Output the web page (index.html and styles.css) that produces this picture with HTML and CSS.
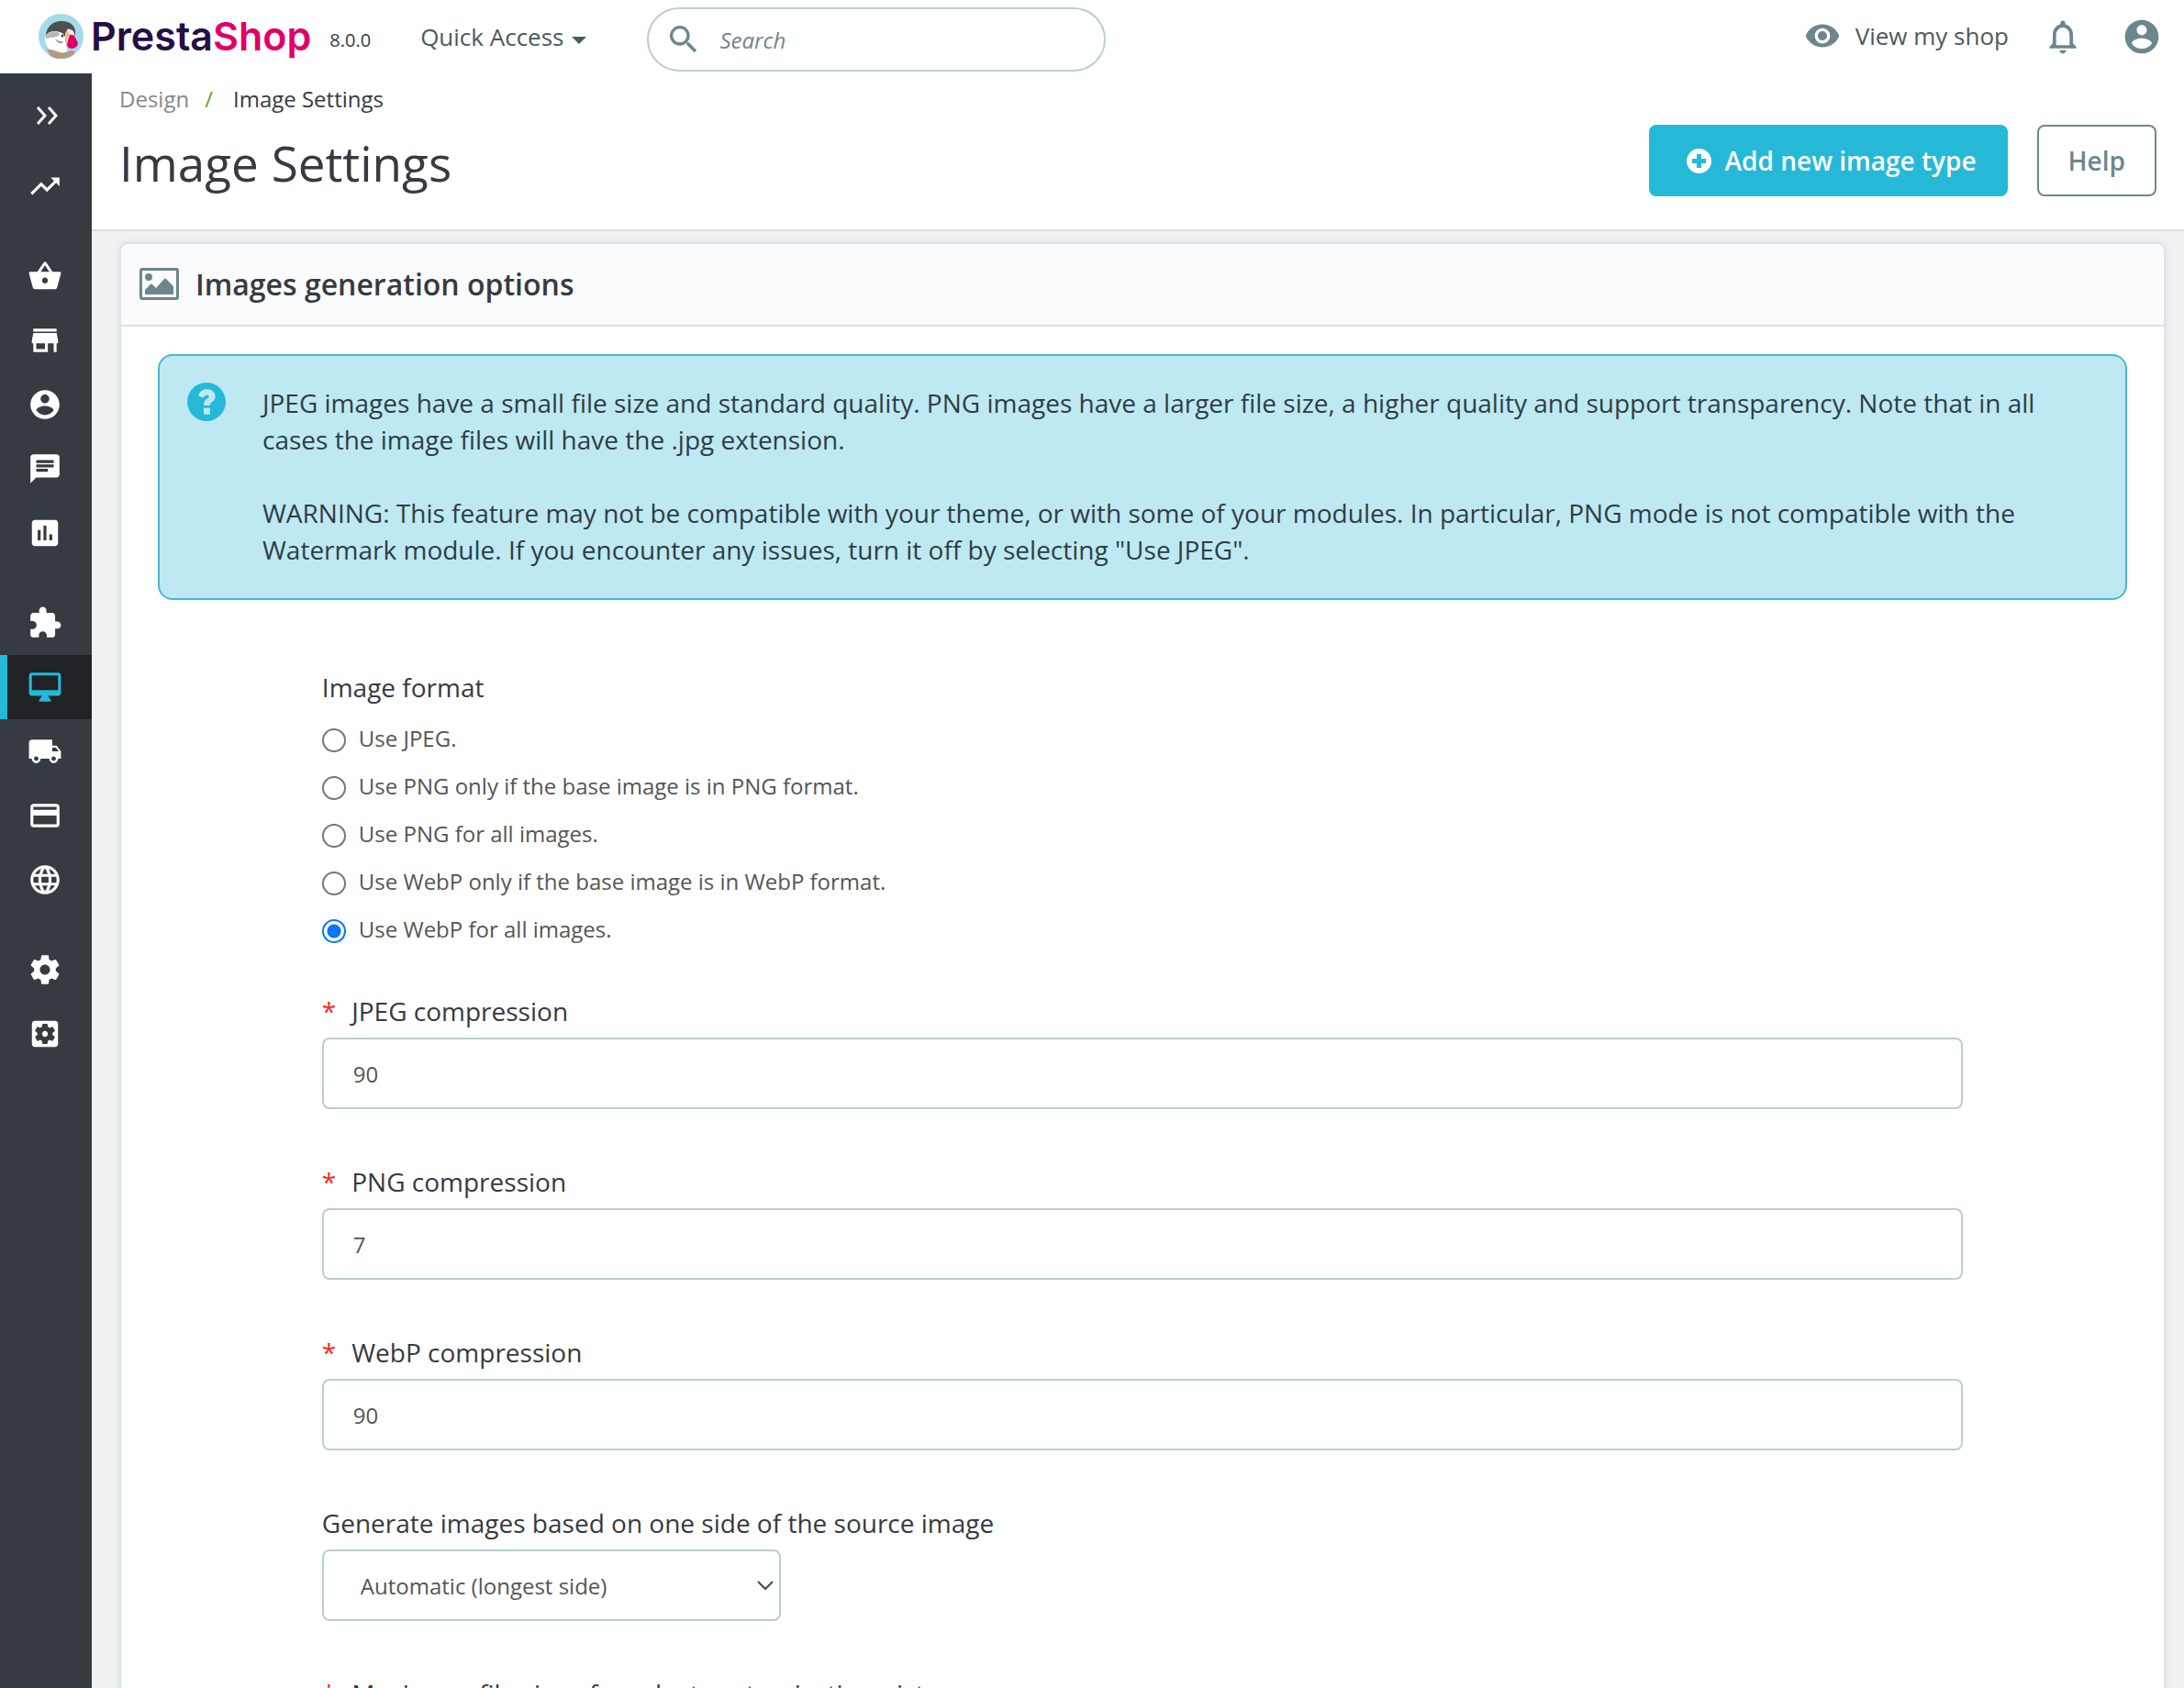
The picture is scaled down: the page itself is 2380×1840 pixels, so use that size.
FILE: index.html
```html
<!DOCTYPE html>
<html lang="en">
<head>
<meta charset="utf-8">
<meta name="viewport" content="width=device-width, initial-scale=1">
<title>Image Settings • PrestaShop</title>
<link rel="stylesheet" href="styles.css">
</head>
<body>
<header class="topbar">
  <a class="brand" href="#" aria-label="PrestaShop">
    <svg class="brand-mark" viewBox="0 0 49 49" aria-hidden="true">
      <defs><clipPath id="roundel"><circle cx="24.500" cy="24.500" r="24.500"/></clipPath></defs>
      <g clip-path="url(#roundel)">
        <rect width="49" height="49" fill="#a4dbe8"/>
        <path d="M8 27C7 15 15 8 25 8s16 6 15 14l-4 7-20 2z" fill="#4d4f50"/>
        <path d="M7 27c1-5 5-8 10-8 6 0 11 2 12 7l2 15-8 4c-9 0-15-8-16-18z" fill="#fff"/>
        <path d="M8 25c3-5 8-7 13-5 3 1 2 4-1 5-5 1-8 1-12 2z" fill="#b9b6b4"/>
        <path d="M9 39c4-1 8 1 14 3 4 1 8 0 12-2 3 0 5 1 5 2L34 49H15z" fill="#b39a80"/>
        <path d="M31 17c4-1 8 1 8 6l-4 3-4-3z" fill="#f3e9e9"/>
        <path d="M30 19c3 0 4 3 4 6l-3 10c-2-3-3-13-1-16z" fill="#f5b895"/>
        <path d="M34 23c3-1 7 2 9 10-1 3-4 5-8 5-2-1-4-2-4-4z" fill="#df0067"/>
        <path d="M18 27c3 3 6 4 9 3-1 3-6 3-9-3z" fill="#77716e"/>
        <circle cx="26" cy="24" r="1.500" fill="#3c3c3c"/>
      </g>
    </svg>
    <span class="brand-name">Presta<span class="brand-accent">Shop</span></span>
  </a>
  <span class="version">8.0.0</span>
  <button class="quick" type="button">Quick Access
    <svg class="caret" viewBox="0 0 16 8" aria-hidden="true"><path d="M0 0h16L8 8z"/></svg>
  </button>
  <form class="search">
    <svg class="search-icon" viewBox="0 0 24 24" aria-hidden="true"><path d="M15.500 14h-.79l-.28-.27A6.471 6.471 0 0 0 16 9.500 6.500 6.500 0 1 0 9.500 16c1.610 0 3.090-.59 4.230-1.570l.27.28v.79l5 4.990L20.490 19l-4.990-5zm-6 0C7.010 14 5 11.990 5 9.500S7.010 5 9.500 5 14 7.010 14 9.500 11.990 14 9.500 14z"/></svg>
    <input class="search-input" type="search" placeholder="Search" aria-label="Search">
  </form>
  <div class="tools">
    <a class="view-shop" href="#">
      <svg class="eye" viewBox="0 0 24 24" aria-hidden="true"><path d="M12 4.500C7 4.500 2.730 7.610 1 12c1.730 4.390 6 7.500 11 7.500s9.270-3.110 11-7.500c-1.730-4.390-6-7.500-11-7.500zM12 17c-2.760 0-5-2.240-5-5s2.240-5 5-5 5 2.240 5 5-2.240 5-5 5zm0-8c-1.660 0-3 1.340-3 3s1.340 3 3 3 3-1.340 3-3-1.340-3-3-3z"/></svg>
      View my shop
    </a>
    <button class="tool" type="button" aria-label="Notifications"><svg viewBox="0 0 24 24"><path d="M12 22c1.100 0 2-.9 2-2h-4c0 1.100.9 2 2 2zm6-6v-5c0-3.070-1.630-5.640-4.500-6.320V4c0-.83-.67-1.500-1.500-1.500s-1.500.67-1.500 1.500v.68C7.640 5.360 6 7.920 6 11v5l-2 2v1h16v-1l-2-2zm-2 1H8v-6c0-2.480 1.510-4.500 4-4.500s4 2.020 4 4.500v6z"/></svg></button>
    <button class="tool" type="button" aria-label="Account"><svg viewBox="0 0 24 24"><path d="M12 2C6.480 2 2 6.480 2 12s4.480 10 10 10 10-4.480 10-10S17.520 2 12 2zm0 3c1.660 0 3 1.340 3 3s-1.340 3-3 3-3-1.340-3-3 1.340-3 3-3zm0 14.200c-2.500 0-4.710-1.280-6-3.220.03-1.990 4-3.080 6-3.080 1.990 0 5.970 1.090 6 3.080-1.290 1.940-3.500 3.220-6 3.220z"/></svg></button>
  </div>
</header>

<div class="shell">
  <nav class="sidebar" aria-label="Main menu">
    <button class="expand" type="button" aria-label="Expand menu"><svg viewBox="0 0 24 20"><path d="M2 1l8 9-8 9M14 1l8 9-8 9"/></svg></button>
    <ul class="menu">
      <li><a class="menu-link" href="#" aria-label="Dashboard"><svg viewBox="0 0 24 24"><path d="M16 6l2.290 2.290-4.880 4.880-4-4L2 16.590 3.410 18l6-6 4 4 6.300-6.290L22 12V6z"/></svg></a></li>
    </ul>
    <ul class="menu">
      <li><a class="menu-link" href="#" aria-label="Orders"><svg viewBox="0 0 24 24"><path d="M17.210 9l-4.380-6.560c-.19-.28-.51-.42-.83-.42-.32 0-.64.14-.83.43L6.790 9H2c-.55 0-1 .45-1 1 0 .09.01.18.04.27l2.540 9.270c.23.84 1 1.460 1.920 1.460h13c.92 0 1.690-.62 1.930-1.460l2.540-9.270L23 10c0-.55-.45-1-1-1h-4.790zM9 9l3-4.400L15 9H9zm3 8c-1.100 0-2-.9-2-2s.9-2 2-2 2 .9 2 2-.9 2-2 2z"/></svg></a></li>
      <li><a class="menu-link" href="#" aria-label="Catalog"><svg viewBox="0 0 24 24"><path d="M20 4H4v2h16V4zm1 10v-2l-1-5H4l-1 5v2h1v6h10v-6h4v6h2v-6h1zm-9 4H6v-4h6v4z"/></svg></a></li>
      <li><a class="menu-link" href="#" aria-label="Customers"><svg viewBox="0 0 24 24"><path d="M12 2C6.480 2 2 6.480 2 12s4.480 10 10 10 10-4.480 10-10S17.520 2 12 2zm0 3c1.660 0 3 1.340 3 3s-1.340 3-3 3-3-1.340-3-3 1.340-3 3-3zm0 14.200c-2.500 0-4.710-1.280-6-3.220.03-1.990 4-3.080 6-3.080 1.990 0 5.970 1.090 6 3.080-1.290 1.940-3.500 3.220-6 3.220z"/></svg></a></li>
      <li><a class="menu-link" href="#" aria-label="Customer service"><svg viewBox="0 0 24 24"><path d="M20 2H4c-1.100 0-1.990.9-1.990 2L2 22l4-4h14c1.100 0 2-.9 2-2V4c0-1.100-.9-2-2-2zM6 9h12v2H6V9zm8 5H6v-2h8v2zm4-6H6V6h12v2z"/></svg></a></li>
      <li><a class="menu-link" href="#" aria-label="Stats"><svg viewBox="0 0 24 24"><path d="M19 3H5c-1.100 0-2 .9-2 2v14c0 1.100.9 2 2 2h14c1.100 0 2-.9 2-2V5c0-1.100-.9-2-2-2zM9 17H7v-7h2v7zm4 0h-2V7h2v10zm4 0h-2v-4h2v4z"/></svg></a></li>
    </ul>
    <ul class="menu">
      <li><a class="menu-link" href="#" aria-label="Modules"><svg viewBox="0 0 24 24"><path d="M20.500 11H19V7c0-1.100-.9-2-2-2h-4V3.500C13 2.120 11.880 1 10.500 1S8 2.120 8 3.500V5H4c-1.100 0-1.990.9-1.990 2v3.800H3.500c1.490 0 2.700 1.210 2.700 2.700s-1.210 2.700-2.700 2.700H2V20c0 1.100.9 2 2 2h3.800v-1.500c0-1.490 1.210-2.700 2.700-2.700 1.490 0 2.700 1.210 2.700 2.700V22H17c1.100 0 2-.9 2-2v-4h1.500c1.380 0 2.500-1.120 2.500-2.500S21.880 11 20.500 11z"/></svg></a></li>
      <li><a class="menu-link active" href="#" aria-label="Design" aria-current="page"><svg viewBox="0 0 24 24"><path d="M21 2H3c-1.100 0-2 .9-2 2v12c0 1.100.9 2 2 2h7l-2 3v1h8v-1l-2-3h7c1.100 0 2-.9 2-2V4c0-1.100-.9-2-2-2zm0 12H3V4h18v10z"/></svg></a></li>
      <li><a class="menu-link" href="#" aria-label="Shipping"><svg viewBox="0 0 24 24"><path d="M20 8h-3V4H3c-1.100 0-2 .9-2 2v11h2c0 1.660 1.340 3 3 3s3-1.340 3-3h6c0 1.660 1.340 3 3 3s3-1.340 3-3h2v-5l-3-4zM6 18.500c-.83 0-1.500-.67-1.500-1.500s.67-1.500 1.500-1.500 1.500.67 1.500 1.500-.67 1.500-1.500 1.500zm13.500-9l1.960 2.500H17V9.500h2.500zm-1.500 9c-.83 0-1.500-.67-1.500-1.500s.67-1.500 1.500-1.500 1.500.67 1.500 1.500-.67 1.500-1.500 1.500z"/></svg></a></li>
      <li><a class="menu-link" href="#" aria-label="Payment"><svg viewBox="0 0 24 24"><path d="M20 4H4c-1.110 0-1.990.89-1.990 2L2 18c0 1.110.89 2 2 2h16c1.110 0 2-.89 2-2V6c0-1.110-.89-2-2-2zm0 14H4v-6h16v6zm0-10H4V6h16v2z"/></svg></a></li>
      <li><a class="menu-link" href="#" aria-label="International"><svg viewBox="0 0 24 24"><path d="M11.990 2C6.470 2 2 6.480 2 12s4.470 10 9.990 10C17.520 22 22 17.520 22 12S17.520 2 11.990 2zm6.930 6h-2.950c-.32-1.250-.78-2.450-1.380-3.560 1.840.63 3.370 1.910 4.330 3.560zM12 4.040c.83 1.200 1.480 2.530 1.910 3.960h-3.820c.43-1.430 1.080-2.760 1.910-3.960zM4.260 14C4.100 13.360 4 12.690 4 12s.1-1.360.26-2h3.380c-.08.66-.14 1.320-.14 2 0 .68.06 1.340.14 2H4.260zm.82 2h2.950c.32 1.250.78 2.450 1.380 3.560-1.840-.63-3.370-1.900-4.330-3.560zm2.950-8H5.080c.96-1.660 2.490-2.930 4.330-3.560C8.810 5.550 8.350 6.750 8.030 8zM12 19.960c-.83-1.200-1.480-2.530-1.910-3.960h3.820c-.43 1.430-1.080 2.760-1.910 3.960zM14.340 14H9.660c-.09-.66-.16-1.320-.16-2 0-.68.07-1.350.16-2h4.680c.09.65.16 1.320.16 2 0 .68-.07 1.340-.16 2zm.25 5.560c.6-1.110 1.060-2.310 1.380-3.560h2.950c-.96 1.650-2.490 2.930-4.330 3.560zM16.360 14c.08-.66.14-1.320.14-2 0-.68-.06-1.340-.14-2h3.380c.16.64.26 1.310.26 2s-.1 1.360-.26 2h-3.380z"/></svg></a></li>
    </ul>
    <ul class="menu">
      <li><a class="menu-link" href="#" aria-label="Shop parameters"><svg viewBox="0 0 24 24"><path d="M19.430 12.980c.04-.32.07-.64.07-.98s-.03-.66-.07-.98l2.110-1.650c.19-.15.24-.42.12-.64l-2-3.460c-.12-.22-.39-.3-.61-.22l-2.490 1c-.52-.4-1.080-.73-1.690-.98l-.38-2.650C14.460 2.180 14.250 2 14 2h-4c-.25 0-.46.18-.49.42l-.38 2.650c-.61.25-1.170.59-1.690.98l-2.490-1c-.23-.09-.49 0-.61.22l-2 3.460c-.13.22-.07.49.12.64l2.110 1.650c-.04.32-.07.65-.07.98s.03.66.07.98l-2.110 1.650c-.19.15-.24.42-.12.64l2 3.460c.12.22.39.3.61.22l2.490-1c.52.4 1.080.73 1.690.98l.38 2.650c.03.24.24.42.49.42h4c.25 0 .46-.18.49-.42l.38-2.650c.61-.25 1.170-.59 1.690-.98l2.490 1c.23.09.49 0 .61-.22l2-3.460c.12-.22.07-.49-.12-.64l-2.110-1.650zM12 15.500c-1.930 0-3.500-1.570-3.500-3.500s1.570-3.500 3.500-3.500 3.500 1.570 3.500 3.500-1.570 3.500-3.500 3.500z"/></svg></a></li>
      <li><a class="menu-link" href="#" aria-label="Advanced parameters"><svg viewBox="0 0 24 24"><path d="M12 10c-1.100 0-2 .9-2 2s.9 2 2 2 2-.9 2-2-.9-2-2-2zm7-7H5c-1.110 0-2 .9-2 2v14c0 1.100.89 2 2 2h14c1.110 0 2-.9 2-2V5c0-1.100-.89-2-2-2zm-1.750 9c0 .23-.02.46-.05.68l1.480 1.160c.13.11.17.3.08.45l-1.400 2.420c-.09.15-.27.21-.43.15l-1.740-.7c-.36.28-.76.51-1.180.69l-.26 1.850c-.03.17-.18.3-.35.3h-2.800c-.17 0-.32-.13-.35-.29l-.26-1.850c-.43-.18-.82-.41-1.180-.69l-1.740.7c-.16.06-.34 0-.43-.15l-1.400-2.420c-.09-.15-.05-.34.08-.45l1.480-1.160c-.03-.23-.05-.46-.05-.69 0-.23.02-.46.05-.68l-1.480-1.160c-.13-.11-.17-.3-.08-.45l1.400-2.420c.09-.15.27-.21.43-.15l1.740.7c.36-.28.76-.51 1.180-.69l.26-1.850c.03-.17.18-.3.35-.3h2.800c.17 0 .32.13.35.29l.26 1.850c.43.18.82.41 1.180.69l1.740-.7c.16-.06.34 0 .43.15l1.400 2.420c.09.15.05.34-.08.45l-1.480 1.160c.03.23.05.46.05.69z"/></svg></a></li>
    </ul>
  </nav>

  <main class="main">
    <div class="page-head">
      <nav aria-label="Breadcrumb">
        <ol class="breadcrumb">
          <li><a class="crumb-parent" href="#">Design</a></li>
          <li class="crumb-sep" aria-hidden="true">/</li>
          <li>Image Settings</li>
        </ol>
      </nav>
      <div class="title-row">
        <h1 class="title">Image Settings</h1>
        <button class="btn btn-primary" type="button">
          <svg class="btn-icon" viewBox="0 0 27 27" aria-hidden="true"><path fill-rule="evenodd" d="M13.500 0a13.500 13.500 0 1 1 0 27 13.500 13.500 0 0 1 0-27zM11 6v5H6v5h5v5h5v-5h5v-5h-5V6z"/></svg>
          Add new image type
        </button>
        <button class="btn btn-outline" type="button">Help</button>
      </div>
    </div>

    <section class="panel">
      <h2 class="panel-head">
        <svg class="panel-icon" viewBox="0 0 43 35" aria-hidden="true"><path fill-rule="evenodd" d="M3 0h37a3 3 0 0 1 3 3v29a3 3 0 0 1-3 3H3a3 3 0 0 1-3-3V3a3 3 0 0 1 3-3zm0 3v29h37V3z"/><circle cx="10" cy="10" r="4"/><path d="M6 29v-5l7-7 5 5 10-11 9 9v9z"/></svg>
        Images generation options
      </h2>
      <div class="panel-body">
        <div class="alert">
          <svg class="alert-icon" viewBox="0 0 24 24" aria-hidden="true"><circle cx="12" cy="12" r="12" fill="#25b9d7"/><path d="M6.900 8.200C7.800 5.500 9.600 4.200 12.200 4.200c3 0 5.300 1.700 5.300 4.400 0 1.900-1 2.900-2.100 3.700-.9.7-1.300 1.100-1.300 2h-3.700c-.2-2.200.6-3.300 1.800-4.100.9-.6 1.300-.9 1.300-1.500s-.5-1-1.300-1c-.9 0-1.400.5-2.200 1.800z" fill="#bee9f2"/><path d="M10.300 15.800h3.900v4h-3.900z" fill="#bee9f2"/></svg>
          <div class="alert-text">
            <p>JPEG images have a small file size and standard quality. PNG images have a larger file size, a higher quality and support transparency. Note that in all cases the image files will have the .jpg extension.</p>
            <p>WARNING: This feature may not be compatible with your theme, or with some of your modules. In particular, PNG mode is not compatible with the Watermark module. If you encounter any issues, turn it off by selecting "Use JPEG".</p>
          </div>
        </div>

        <form class="form">
          <fieldset class="field choices">
            <legend class="label">Image format</legend>
            <label class="choice"><input class="radio" type="radio" name="format">Use JPEG.</label>
            <label class="choice"><input class="radio" type="radio" name="format">Use PNG only if the base image is in PNG format.</label>
            <label class="choice"><input class="radio" type="radio" name="format">Use PNG for all images.</label>
            <label class="choice"><input class="radio" type="radio" name="format">Use WebP only if the base image is in WebP format.</label>
            <label class="choice"><input class="radio" type="radio" name="format" checked>Use WebP for all images.</label>
          </fieldset>
          <div class="field">
            <label class="label" for="jpeg"><span class="star">*</span>JPEG compression</label>
            <input class="control" id="jpeg" type="text" value="90">
          </div>
          <div class="field">
            <label class="label" for="png"><span class="star">*</span>PNG compression</label>
            <input class="control" id="png" type="text" value="7">
          </div>
          <div class="field">
            <label class="label" for="webp"><span class="star">*</span>WebP compression</label>
            <input class="control" id="webp" type="text" value="90">
          </div>
          <div class="field">
            <label class="label" for="side">Generate images based on one side of the source image</label>
            <div class="select-wrap">
              <select class="control select" id="side"><option>Automatic (longest side)</option></select>
              <svg class="chevron" viewBox="0 0 18 10" aria-hidden="true"><path d="M1 1l8 8 8-8"/></svg>
            </div>
          </div>
          <div class="field">
            <label class="label" for="maxsize"><span class="star">*</span>Maximum file size of product customization pictures</label>
            <input class="control" id="maxsize" type="text">
          </div>
        </form>
      </div>
    </section>
  </main>
</div>
</body>
</html>
```
FILE: styles.css
```css
* { box-sizing: border-box; }

body {
  margin: 0;
  height: 100vh;
  display: flex;
  flex-direction: column;
  overflow: hidden;
  background: #eff1f2;
  color: #363a41;
  font-family: "Open Sans", "Noto Sans", sans-serif;
  font-size: 28px;
}

h1, h2, p, ul, ol, fieldset { margin: 0; padding: 0; }
ul, ol { list-style: none; }
fieldset { border: 0; min-width: 0; }
a { color: inherit; text-decoration: none; }
button, input, select { font: inherit; color: inherit; }
button { padding: 0; border: 0; background: none; cursor: pointer; }
svg { display: block; flex: none; }

/* Top bar */
.topbar {
  flex: none;
  display: flex;
  align-items: center;
  height: 80px;
  padding: 0 24px 0 42px;
  background: #fff;
}
.brand { display: flex; align-items: center; gap: 8px; margin-bottom: 2px; }
.brand-mark { width: 49px; height: 49px; }
.brand-name {
  font-family: Inter, "Open Sans", sans-serif;
  font-size: 43px;
  font-weight: 600;
  line-height: 60px;
  color: #250f47;
}
.brand-accent { color: #df0067; }
.version { margin-left: 20px; padding-top: 6px; font-size: 20px; }
.quick {
  display: flex;
  align-items: center;
  gap: 9px;
  margin-left: 54px;
  font-size: 26px;
  color: #4a5a60;
}
.caret { width: 16px; height: 8px; margin-top: 8px; fill: #4a5a60; }
.search {
  display: flex;
  align-items: center;
  gap: 17px;
  width: 500px;
  height: 70px;
  margin: 6px 0 0 66px;
  padding: 0 24px 0 18px;
  border: 2px solid #bbcdd2;
  border-radius: 35px;
}
.search-icon { width: 40px; height: 40px; fill: #6c868e; }
.search-input {
  flex: 1;
  min-width: 0;
  border: 0;
  outline: 0;
  background: none;
  font-size: 24px;
}
.search-input::placeholder { color: #6c868e; font-style: italic; opacity: 1; }
.tools { display: flex; align-items: center; gap: 42px; margin-left: auto; }
.view-shop {
  display: flex;
  align-items: center;
  gap: 16px;
  margin: 0 -5px 2px 0;
  font-size: 26px;
  line-height: 36px;
  color: #4a5a60;
}
.eye { width: 40px; height: 40px; fill: #6c868e; }
.tool svg { width: 44px; height: 44px; fill: #6c868e; }

/* Side menu */
.shell { flex: 1; display: flex; min-height: 0; }
.sidebar {
  flex: none;
  display: flex;
  flex-direction: column;
  gap: 28px;
  width: 100px;
  background: #363a41;
}
.expand { display: grid; place-items: center; height: 92px; margin-bottom: -32px; padding-left: 2px; }
.expand svg { width: 24px; height: 20px; fill: none; stroke: #fff; stroke-width: 3; }
.menu-link {
  display: flex;
  align-items: center;
  height: 70px;
  padding-left: 22px;
  border-left: 8px solid transparent;
}
.menu-link svg { width: 38px; height: 38px; fill: #fff; }
.menu-link.active { background: #202226; border-left-color: #25b9d7; }
.menu-link.active svg { fill: #25b9d7; }

/* Page heading */
.main { flex: 1; min-width: 0; overflow-y: auto; scrollbar-width: none; }
.page-head {
  padding: 10px 30px 36px;
  background: #fff;
  border-bottom: 2px solid #dbdfe2;
}
.breadcrumb { display: flex; font-size: 24px; line-height: 36px; }
.crumb-parent { color: #888; }
.crumb-sep { padding: 0 22px 0 17px; color: #6a9c36; }
.title-row { display: flex; align-items: center; gap: 32px; margin-top: 10px; }
.title {
  flex: 1;
  padding-top: 6px;
  font-size: 53px;
  font-weight: 400;
  line-height: 72px;
}
.btn {
  display: flex;
  align-items: center;
  gap: 12px;
  height: 78px;
  padding: 0 32px;
  border: 2px solid #25b9d7;
  border-radius: 8px;
  font-weight: 600;
}
.btn-primary { padding-left: 39px; gap: 15px; background: #25b9d7; color: #fff; }
.btn-outline { border-color: #6c868e; background: #fff; color: #6c868e; }
.btn-icon { width: 27px; height: 27px; fill: #fff; }

/* Panel */
.panel {
  margin: 12px 20px 0 30px;
  border: 2px solid #dbe3e6;
  border-radius: 10px;
  background: #fff;
  box-shadow: 0 0 8px rgba(0, 0, 0, 0.08);
}
.panel-head {
  display: flex;
  align-items: center;
  gap: 18px;
  height: 90px;
  padding: 0 20px 2px;
  border-bottom: 2px solid #dbe3e6;
  border-radius: 8px 8px 0 0;
  background: #fafbfc;
  font-size: 32px;
  font-weight: 600;
}
.panel-icon { width: 43px; height: 35px; fill: #6c868e; }
.panel-body { padding: 30px 40px 40px; }
.alert {
  display: flex;
  align-items: flex-start;
  gap: 40px;
  padding: 29px 30px 33px;
  border: 2px solid #4bb6cf;
  border-radius: 16px;
  background: #bee9f2;
  color: #2e3d45;
  line-height: 40px;
}
.alert-icon { width: 42px; height: 42px; }
.alert-text { display: grid; gap: 40px; padding-top: 2px; }

/* Form */
.form { width: calc(100% * 10 / 12); margin: 76px auto 0; }
.field { margin-bottom: 60px; }
.label {
  display: flex;
  gap: 17px;
  margin-bottom: 10px;
  padding: 0;
  line-height: 38px;
}
.star { color: #f32b27; }
.choices { display: grid; gap: 16px; margin-bottom: 52px; }
.choices .label { margin-bottom: 19px; }
.choice {
  display: flex;
  align-items: center;
  gap: 14px;
  font-size: 24px;
  line-height: 36px;
  color: #555;
}
.radio {
  appearance: none;
  width: 26px;
  height: 26px;
  margin: 4px 0 0;
  border: 2px solid #767676;
  border-radius: 50%;
  background: #fff;
}
.radio:checked {
  border-color: #0b75ff;
  background: radial-gradient(circle, #0b75ff 7px, #fff 8px);
}
.control {
  display: block;
  width: 100%;
  height: 78px;
  padding: 0 32px;
  border: 2px solid #bbcdd2;
  border-radius: 8px;
  background: #fff;
  font-size: 24px;
  color: #555;
}
.select-wrap { position: relative; width: 500px; }
.select { appearance: none; padding: 0 40px; }
.chevron {
  position: absolute;
  top: 34px;
  right: 8px;
  width: 18px;
  height: 10px;
  fill: none;
  stroke: #444;
  stroke-width: 2;
  pointer-events: none;
}
```
